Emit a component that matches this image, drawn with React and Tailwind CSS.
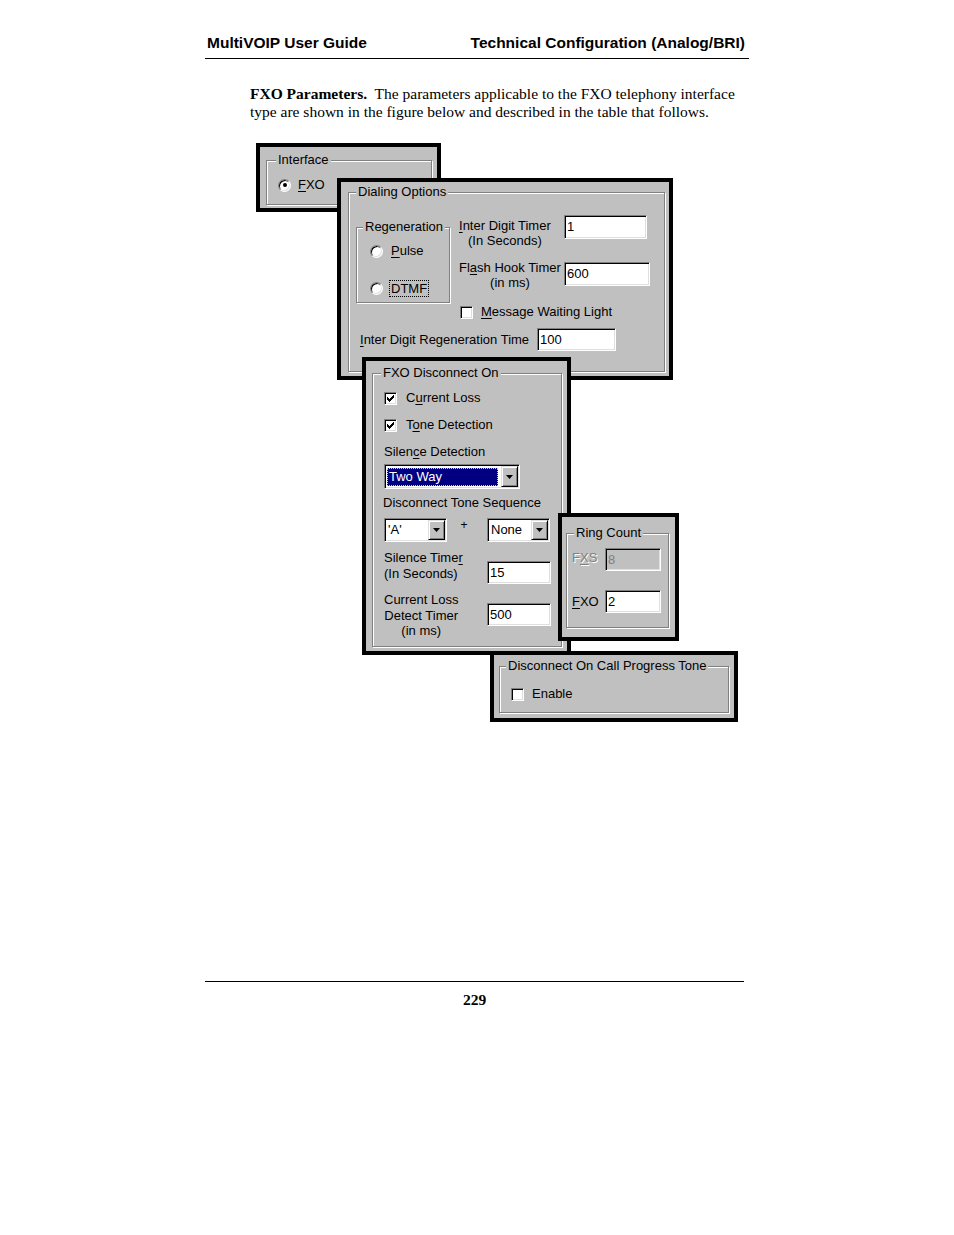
const sunken =
  'border border-t-[#808080] border-l-[#808080] border-r-white border-b-white shadow-[inset_1px_1px_0_#000,inset_-1px_-1px_0_#dfdfdf]';
const raised =
  'border border-t-[#dfdfdf] border-l-[#dfdfdf] border-r-black border-b-black shadow-[inset_1px_1px_0_#fff,inset_-1px_-1px_0_#808080]';
const panel = 'absolute border-4 border-black bg-[#c0c0c0] flex flex-col';

// pixel pattern of the classic check mark
const tick = [
  [6, 0, 1], [5, 1, 2], [0, 2, 1], [4, 2, 3], [0, 3, 2],
  [3, 3, 3], [0, 4, 5], [1, 5, 3], [2, 6, 1],
];

function U({ children }) {
  return <span className="underline underline-offset-[2px]">{children}</span>;
}

function GroupBox({ label, pos, className = '', children }) {
  return (
    <div className={`relative border border-[#808080] shadow-[inset_1px_1px_0_#fff,1px_1px_0_#fff] ${className}`}>
      <span className={`absolute -top-[9px] ${pos} bg-[#c0c0c0] px-[2px] leading-[16px] whitespace-nowrap`}>
        {label}
      </span>
      {children}
    </div>
  );
}

function Edit({ className = '', disabled, children }) {
  return (
    <div
      className={`flex items-center pl-[2px] shrink-0 ${sunken} ${
        disabled ? 'bg-[#c0c0c0] text-[#808080]' : 'bg-white'
      } ${className}`}
    >
      {children}
    </div>
  );
}

function Check({ checked }) {
  return (
    <div className={`w-[13px] h-[13px] shrink-0 bg-white flex items-center justify-center ${sunken}`}>
      {checked && (
        <svg width="7" height="7" viewBox="0 0 7 7" shapeRendering="crispEdges">
          {tick.map(([x, y, w], i) => (
            <rect key={i} x={x} y={y} width={w} height={1} fill="#000" />
          ))}
        </svg>
      )}
    </div>
  );
}

function Radio({ checked }) {
  return (
    <div className={`w-[13px] h-[13px] shrink-0 rounded-full bg-white flex items-center justify-center ${sunken}`}>
      {checked && <div className="w-[4px] h-[4px] rounded-full bg-black" />}
    </div>
  );
}

function DropButton() {
  return (
    <div className={`w-[17px] h-full shrink-0 bg-[#c0c0c0] flex items-center justify-center ${raised}`}>
      <svg width="7" height="4" viewBox="0 0 7 4">
        <path d="M0 0h7L3.5 4z" fill="#000" />
      </svg>
    </div>
  );
}

function Combo({ className = '', selected, children }) {
  return (
    <div className={`flex p-[1px] bg-white shrink-0 ${sunken} ${className}`}>
      {selected ? (
        <div className="flex-1 ml-[1px] mt-[2px] mb-[1px] mr-[3px] flex items-center pl-[1px] bg-[#000080] text-white border border-dotted border-[#e8e800]">
          {children}
        </div>
      ) : (
        <div className="flex-1 flex items-center pl-[2px]">{children}</div>
      )}
      <DropButton />
    </div>
  );
}

export default function App() {
  return (
    <div className="w-[954px] min-h-[1235px] bg-white text-black flex flex-col">
      <header className="ml-[205px] w-[544px] pt-[34px] pb-[6px] pl-[2px] pr-[4px] border-b border-black flex justify-between font-['Liberation_Sans',Arial,sans-serif] font-bold text-[15.5px] leading-[18px]">
        <span>MultiVOIP User Guide</span>
        <span>Technical Configuration (Analog/BRI)</span>
      </header>

      <p className="ml-[250px] mt-[26px] w-[495px] font-['Liberation_Serif','Times_New_Roman',serif] text-[15.5px] leading-[18px]">
        <b>FXO Parameters.</b>&nbsp; The parameters applicable to the FXO telephony interface type are shown in
        the figure below and described in the table that follows.
      </p>

      {/* overlapping dialog fragments */}
      <div className="relative mt-[22px] h-[580px] w-full font-['Liberation_Sans',Arial,sans-serif] text-[13px] leading-[16px]">
        <div className={`${panel} left-[256px] top-0 w-[185px] h-[69px] pt-[13px] pl-[6px] pr-[5px] pb-[3px]`}>
          <GroupBox label="Interface" pos="left-[9px]" className="flex-1">
            <div className="mt-[16px] ml-[11px] h-[16px] flex items-center gap-[7px]">
              <Radio checked />
              <span>
                <U>F</U>XO
              </span>
            </div>
          </GroupBox>
        </div>

        <div className={`${panel} left-[337px] top-[35px] w-[336px] h-[202px] pt-[10px] pl-[7px] pr-[4px] pb-[4px]`}>
          <GroupBox label="Dialing Options" pos="left-[7px]" className="flex-1">
            <div className="flex items-start">
              <GroupBox label="Regeneration" pos="left-[6px]" className="ml-[7px] mt-[34px] w-[94px] h-[76px] shrink-0">
                <div className="ml-[13px] mt-[15px] h-[16px] flex items-center gap-[8px]">
                  <Radio />
                  <span>
                    <U>P</U>ulse
                  </span>
                </div>
                <div className="ml-[13px] mt-[21px] h-[16px] flex items-center gap-[6px]">
                  <Radio />
                  <span className="border border-dotted border-black px-[1px] leading-[15px]">DTMF</span>
                </div>
              </GroupBox>
              <div className="ml-[9px] mt-[22px] flex flex-col">
                <div className="flex">
                  <div className="w-[105px] pt-[3px] leading-[15px]">
                    <div className="w-fit text-center">
                      <U>I</U>nter Digit Timer
                      <br />
                      (In Seconds)
                    </div>
                  </div>
                  <Edit className="w-[83px] h-[24px]">1</Edit>
                </div>
                <div className="mt-[12px] flex">
                  <div className="w-[105px] leading-[15px]">
                    <div className="w-fit text-center whitespace-nowrap">
                      Fl<U>a</U>sh Hook Timer
                      <br />
                      (in ms)
                    </div>
                  </div>
                  <Edit className="mt-[2px] w-[86px] h-[24px]">600</Edit>
                </div>
                <div className="mt-[14px] ml-[1px] h-[16px] flex items-center gap-[8px]">
                  <Check />
                  <span>
                    <U>M</U>essage Waiting Light
                  </span>
                </div>
              </div>
            </div>
            <div className="mt-[8px] ml-[11px] flex">
              <div className="w-[177px] pt-[4px]">
                <U>I</U>nter Digit Regeneration Time
              </div>
              <Edit className="w-[79px] h-[23px]">100</Edit>
            </div>
          </GroupBox>
        </div>

        <div className={`${panel} left-[362px] top-[214px] w-[209px] h-[298px] pt-[12px] pl-[6px] pr-[5px] pb-[4px]`}>
          <GroupBox label="FXO Disconnect On" pos="left-[8px]" className="flex-1">
            <div className="mt-[16px] ml-[11px] h-[16px] flex items-center gap-[9px]">
              <Check checked />
              <span>
                C<U>u</U>rrent Loss
              </span>
            </div>
            <div className="mt-[11px] ml-[11px] h-[16px] flex items-center gap-[9px]">
              <Check checked />
              <span>
                T<U>o</U>ne Detection
              </span>
            </div>
            <div className="mt-[11px] ml-[11px]">
              Silen<U>c</U>e Detection
            </div>
            <Combo selected className="mt-[4px] ml-[11px] w-[136px] h-[25px]">
              Two Way
            </Combo>
            <div className="mt-[6px] ml-[10px]">Disconnect Tone Sequence</div>
            <div className="mt-[7px] ml-[11px] flex">
              <Combo className="w-[63px] h-[24px]">'A'</Combo>
              <div className="w-[40px] pr-[6px] text-center leading-[14px] text-[12px]">+</div>
              <Combo className="w-[63px] h-[24px]">None</Combo>
            </div>
            <div className="mt-[8px] ml-[11px] flex">
              <div className="w-[103px]">
                Silence Time<U>r</U>
                <br />
                (In Seconds)
              </div>
              <Edit className="mt-[11px] w-[64px] h-[23px]">15</Edit>
            </div>
            <div className="mt-[8px] ml-[11px] flex">
              <div className="w-[103px] leading-[15.5px]">
                <div className="w-fit text-center">
                  Current Loss
                  <br />
                  Detect Timer
                  <br />
                  (in ms)
                </div>
              </div>
              <Edit className="mt-[11px] w-[64px] h-[23px]">500</Edit>
            </div>
          </GroupBox>
        </div>

        <div className={`${panel} left-[558px] top-[370px] w-[121px] h-[128px] pt-[16px] pl-[4px] pr-[6px] pb-[9px]`}>
          <GroupBox label="Ring Count" pos="left-[7px]" className="flex-1">
            <div className="mt-[14px] ml-[5px] flex">
              <div className="w-[33px] pt-[2px] text-[#808080] [text-shadow:1px_1px_0_#fff]">
                F<U>X</U>S
              </div>
              <Edit disabled className="w-[56px] h-[23px]">
                8
              </Edit>
            </div>
            <div className="mt-[19px] ml-[5px] flex">
              <div className="w-[33px] pt-[4px]">
                <U>F</U>XO
              </div>
              <Edit className="w-[56px] h-[23px]">2</Edit>
            </div>
          </GroupBox>
        </div>

        <div className={`${panel} left-[490px] top-[508px] w-[248px] h-[71px] pt-[11px] pl-[5px] pr-[5px] pb-[5px]`}>
          <GroupBox label="Disconnect On Call Progress Tone" pos="left-[6px]" className="flex-1">
            <div className="mt-[19px] ml-[11px] h-[16px] flex items-center gap-[8px]">
              <Check />
              <span>Enable</span>
            </div>
          </GroupBox>
        </div>
      </div>

      <footer className="ml-[205px] w-[539px] mt-[258px] border-t border-black pt-[9px] text-center font-['Liberation_Serif','Times_New_Roman',serif] font-bold text-[15.5px] leading-[18px]">
        229
      </footer>
    </div>
  );
}
